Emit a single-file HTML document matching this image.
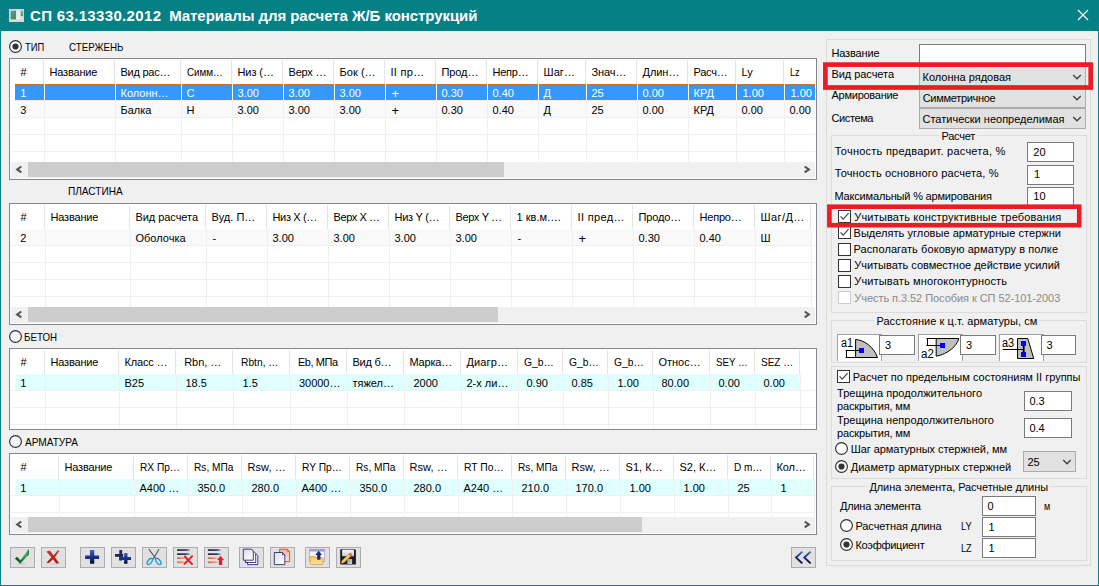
<!DOCTYPE html>
<html><head><meta charset="utf-8"><title>СП 63.13330.2012</title><style>
html,body{margin:0;padding:0}
body{width:1099px;height:586px;overflow:hidden;background:#f0f0f0;position:relative;font-family:"Liberation Sans",sans-serif;font-size:11px;color:#000}
#win{position:absolute;left:0;top:0;width:1097px;height:585px;border:1px solid #0a8287;border-top:none;}
div,span,svg{position:absolute;box-sizing:content-box}
.abs{position:absolute}
.titlebar{left:0;top:0;width:1099px;height:31px;background:#058186}
.t{white-space:pre;line-height:13px;font-size:11px;color:#000}
.t.title{font-size:15px;line-height:18px;font-weight:bold;color:#fff}
.t.w{color:#fff}
.t.dis{color:#8a8a8a}
.t.big{font-size:12px;line-height:13px}
.t.plus{font-size:13px}
.lb{border:1px solid #828790;background:#fff}
.hs{width:1px;height:24px;background:#e5e5e5}
.vg{width:1px;background:#f0f0f0}
.vgs{width:1px;height:16px;background:#fff;opacity:.9}
.hg{height:1px;background:#f0f0f0}
.row{height:16px}
.row.sel{background:#3399ff;box-sizing:border-box;border-top:1px dotted #c87020;border-left:1px dotted #c87020;border-right:1px dotted #c87020}
.row.alt{background:#f9f9f9}
.row.cy{background:#e0ffff}
.sb{height:16px;background:#f0f0f0}
.thumb{height:15px;background:#cdcdcd}
.btn{border:1px solid #adadad;background:#e1e1e1}
.btn svg{left:0;top:0}
.grp{border:1px solid #dcdcdc}
.edit{border:1px solid #7a7a7a;background:#fff}
.combo{border:1px solid #adadad;background:#e1e1e1}
.pic{border:1px solid #a0a0a0;background:#fff;border-bottom:none}
</style></head><body>
<div id="win"></div>
<div class="titlebar"></div>
<svg class="abs" style="left:9px;top:9px" width="15" height="13" viewBox="0 0 15 13">
<defs><linearGradient id="ig" x1="0" y1="0" x2="0.6" y2="1"><stop offset="0" stop-color="#7c98d0"/><stop offset="0.45" stop-color="#4f8f8a"/><stop offset="1" stop-color="#3a9a48"/></linearGradient>
<linearGradient id="ig2" x1="0" y1="0" x2="0" y2="1"><stop offset="0" stop-color="#8fb0c8"/><stop offset="1" stop-color="#4a9a58"/></linearGradient></defs>
<rect x="0" y="0" width="15" height="13" fill="#d4d8d6"/>
<rect x="1.6" y="1.7" width="5.4" height="8.6" fill="url(#ig)"/>
<rect x="7.4" y="1.7" width="4" height="9" fill="#eceeed"/>
<rect x="11.7" y="1.4" width="2.4" height="6" fill="url(#ig2)"/>
<rect x="11.7" y="7.4" width="2.4" height="3.4" fill="#e4e7e6"/>
</svg>
<svg class="abs" style="left:1072px;top:4px" width="22" height="22" viewBox="0 0 22 22">
<path d="M6 6 L16 16 M16 6 L6 16" stroke="#fff" stroke-width="1.1" fill="none"/></svg>
<span id="t0" class="t title" style="left:30px;top:7px;letter-spacing:0.341px;">СП 63.13330.2012</span>
<span id="t1" class="t title" style="left:169.2px;top:7px;letter-spacing:-0.060px;">Материалы для расчета Ж/Б конструкций</span>
<svg class="abs" style="left:7.9px;top:38.9px" width="15" height="15" viewBox="0 0 15 15"><circle cx="7.5" cy="7.5" r="5.9" fill="#fff" stroke="#2e2e2e" stroke-width="1.15"/><circle cx="7.5" cy="7.5" r="3.1" fill="#333"/></svg>
<span id="t2" class="t " style="left:25px;top:41px;transform-origin:0 0;transform:scaleX(0.8516);">ТИП</span>
<span id="t3" class="t " style="left:68.5px;top:41px;transform-origin:0 0;transform:scaleX(0.8860);">СТЕРЖЕНЬ</span>
<span id="t4" class="t " style="left:68.3px;top:185px;transform-origin:0 0;transform:scaleX(0.9160);">ПЛАСТИНА</span>
<svg class="abs" style="left:7.9px;top:329.3px" width="15" height="15" viewBox="0 0 15 15"><circle cx="7.5" cy="7.5" r="5.9" fill="#f4f4f4" stroke="#2e2e2e" stroke-width="1.15"/></svg>
<span id="t5" class="t " style="left:24.3px;top:331px;transform-origin:0 0;transform:scaleX(0.8852);">БЕТОН</span>
<svg class="abs" style="left:7.9px;top:434.2px" width="15" height="15" viewBox="0 0 15 15"><circle cx="7.5" cy="7.5" r="5.9" fill="#f4f4f4" stroke="#2e2e2e" stroke-width="1.15"/></svg>
<span id="t6" class="t " style="left:25px;top:436px;transform-origin:0 0;transform:scaleX(0.9163);">АРМАТУРА</span>
<div class="lb" style="left:9px;top:58px;width:806px;height:120px"></div>
<div class="hs" style="left:43px;top:60px"></div>
<div class="hs" style="left:114px;top:60px"></div>
<div class="hs" style="left:180px;top:60px"></div>
<div class="hs" style="left:231px;top:60px"></div>
<div class="hs" style="left:282px;top:60px"></div>
<div class="hs" style="left:333px;top:60px"></div>
<div class="hs" style="left:384px;top:60px"></div>
<div class="hs" style="left:435px;top:60px"></div>
<div class="hs" style="left:486px;top:60px"></div>
<div class="hs" style="left:537px;top:60px"></div>
<div class="hs" style="left:585px;top:60px"></div>
<div class="hs" style="left:636px;top:60px"></div>
<div class="hs" style="left:687px;top:60px"></div>
<div class="hs" style="left:735px;top:60px"></div>
<div class="hs" style="left:783px;top:60px"></div>
<div class="row sel" style="left:15px;top:84px;width:800px"></div>
<div class="row alt" style="left:15px;top:101px;width:800px"></div>
<div class="vg" style="left:44px;top:84px;height:78px"></div>
<div class="vg" style="left:115px;top:84px;height:78px"></div>
<div class="vg" style="left:181px;top:84px;height:78px"></div>
<div class="vg" style="left:232px;top:84px;height:78px"></div>
<div class="vg" style="left:283px;top:84px;height:78px"></div>
<div class="vg" style="left:334px;top:84px;height:78px"></div>
<div class="vg" style="left:385px;top:84px;height:78px"></div>
<div class="vg" style="left:436px;top:84px;height:78px"></div>
<div class="vg" style="left:487px;top:84px;height:78px"></div>
<div class="vg" style="left:538px;top:84px;height:78px"></div>
<div class="vg" style="left:586px;top:84px;height:78px"></div>
<div class="vg" style="left:637px;top:84px;height:78px"></div>
<div class="vg" style="left:688px;top:84px;height:78px"></div>
<div class="vg" style="left:736px;top:84px;height:78px"></div>
<div class="vg" style="left:784px;top:84px;height:78px"></div>
<div class="hg" style="left:11px;top:100px;width:804px"></div>
<div class="hg" style="left:11px;top:117px;width:804px"></div>
<div class="hg" style="left:11px;top:134px;width:804px"></div>
<div class="hg" style="left:11px;top:151px;width:804px"></div>
<div class="vgs" style="left:44px;top:84px"></div>
<div class="vgs" style="left:115px;top:84px"></div>
<div class="vgs" style="left:181px;top:84px"></div>
<div class="vgs" style="left:232px;top:84px"></div>
<div class="vgs" style="left:283px;top:84px"></div>
<div class="vgs" style="left:334px;top:84px"></div>
<div class="vgs" style="left:385px;top:84px"></div>
<div class="vgs" style="left:436px;top:84px"></div>
<div class="vgs" style="left:487px;top:84px"></div>
<div class="vgs" style="left:538px;top:84px"></div>
<div class="vgs" style="left:586px;top:84px"></div>
<div class="vgs" style="left:637px;top:84px"></div>
<div class="vgs" style="left:688px;top:84px"></div>
<div class="vgs" style="left:736px;top:84px"></div>
<div class="vgs" style="left:784px;top:84px"></div>
<span id="t7" class="t " style="left:20.5px;top:66px;">#</span>
<span id="t8" class="t " style="left:49.5px;top:66px;letter-spacing:-0.179px;">Название</span>
<span id="t9" class="t " style="left:120.5px;top:66px;letter-spacing:-0.258px;">Вид рас…</span>
<span id="t10" class="t " style="left:186.5px;top:66px;transform-origin:0 0;transform:scaleX(0.8926);">Симм…</span>
<span id="t11" class="t " style="left:237.5px;top:66px;letter-spacing:-0.092px;">Низ (…</span>
<span id="t12" class="t " style="left:288.5px;top:66px;letter-spacing:-0.203px;">Верх …</span>
<span id="t13" class="t " style="left:339.5px;top:66px;letter-spacing:0.045px;">Бок (…</span>
<span id="t14" class="t " style="left:390.5px;top:66px;letter-spacing:0.310px;">II пр…</span>
<span id="t15" class="t " style="left:441.5px;top:66px;letter-spacing:-0.107px;">Прод…</span>
<span id="t16" class="t " style="left:492.5px;top:66px;letter-spacing:-0.235px;">Непр…</span>
<span id="t17" class="t " style="left:543.5px;top:66px;letter-spacing:0.060px;">Шаг…</span>
<span id="t18" class="t " style="left:591.5px;top:66px;letter-spacing:-0.107px;">Знач…</span>
<span id="t19" class="t " style="left:642.5px;top:66px;letter-spacing:-0.048px;">Длин…</span>
<span id="t20" class="t " style="left:693.5px;top:66px;letter-spacing:-0.251px;">Расч…</span>
<span id="t21" class="t " style="left:741.5px;top:66px;">Ly</span>
<span id="t22" class="t " style="left:789.5px;top:66px;transform-origin:0 0;transform:scaleX(0.8344);">Lz</span>
<span id="t23" class="t w" style="left:20.2px;top:87px;">1</span>
<span id="t24" class="t w" style="left:120.5px;top:87px;">Колонн…</span>
<span id="t25" class="t w" style="left:186.5px;top:87px;">С</span>
<span id="t26" class="t w" style="left:237.5px;top:87px;">3.00</span>
<span id="t27" class="t w" style="left:288.5px;top:87px;">3.00</span>
<span id="t28" class="t w" style="left:339.5px;top:87px;">3.00</span>
<span id="t29" class="t w plus" style="left:391.5px;top:86.5px;">+</span>
<span id="t30" class="t w" style="left:441.5px;top:87px;">0.30</span>
<span id="t31" class="t w" style="left:492.5px;top:87px;">0.40</span>
<span id="t32" class="t w" style="left:543.5px;top:87px;">Д</span>
<span id="t33" class="t w" style="left:591.5px;top:87px;">25</span>
<span id="t34" class="t w" style="left:642.5px;top:87px;">0.00</span>
<span id="t35" class="t w" style="left:693.5px;top:87px;">КРД</span>
<span id="t36" class="t w" style="left:742.5px;top:87px;">1.00</span>
<span id="t37" class="t w" style="left:790.5px;top:87px;">1.00</span>
<span id="t38" class="t " style="left:20.2px;top:104px;">3</span>
<span id="t39" class="t " style="left:120.5px;top:104px;">Балка</span>
<span id="t40" class="t " style="left:186.5px;top:104px;">Н</span>
<span id="t41" class="t " style="left:237.5px;top:104px;">3.00</span>
<span id="t42" class="t " style="left:288.5px;top:104px;">3.00</span>
<span id="t43" class="t " style="left:339.5px;top:104px;">3.00</span>
<span id="t44" class="t  plus" style="left:391.5px;top:103.5px;">+</span>
<span id="t45" class="t " style="left:441.5px;top:104px;">0.30</span>
<span id="t46" class="t " style="left:492.5px;top:104px;">0.40</span>
<span id="t47" class="t " style="left:543.5px;top:104px;">Д</span>
<span id="t48" class="t " style="left:591.5px;top:104px;">25</span>
<span id="t49" class="t " style="left:642.5px;top:104px;">0.00</span>
<span id="t50" class="t " style="left:693.5px;top:104px;">КРД</span>
<span id="t51" class="t " style="left:741.5px;top:104px;">0.00</span>
<span id="t52" class="t " style="left:789.5px;top:104px;">0.00</span>
<div class="sb" style="left:11px;top:162px;width:804px"></div>
<div class="thumb" style="left:28px;top:162px;width:476px"></div>
<svg class="abs" style="left:11px;top:162px" width="17" height="17" viewBox="0 0 17 17"><path d="M10.3 4.5 L6.2 7.4 L10.3 10.3" fill="none" stroke="#555" stroke-width="2.1"/></svg>
<svg class="abs" style="left:798px;top:162px" width="17" height="17" viewBox="0 0 17 17"><path d="M6.7 4.5 L10.8 7.4 L6.7 10.3" fill="none" stroke="#555" stroke-width="2.1"/></svg>
<div class="lb" style="left:9px;top:203px;width:806px;height:120px"></div>
<div class="hs" style="left:44px;top:205px"></div>
<div class="hs" style="left:129px;top:205px"></div>
<div class="hs" style="left:205px;top:205px"></div>
<div class="hs" style="left:266px;top:205px"></div>
<div class="hs" style="left:327px;top:205px"></div>
<div class="hs" style="left:388px;top:205px"></div>
<div class="hs" style="left:449px;top:205px"></div>
<div class="hs" style="left:510px;top:205px"></div>
<div class="hs" style="left:571px;top:205px"></div>
<div class="hs" style="left:632px;top:205px"></div>
<div class="hs" style="left:693px;top:205px"></div>
<div class="hs" style="left:754px;top:205px"></div>
<div class="hs" style="left:810px;top:205px"></div>
<div class="row alt" style="left:15px;top:229px;width:796px"></div>
<div class="vg" style="left:45px;top:229px;height:78px"></div>
<div class="vg" style="left:130px;top:229px;height:78px"></div>
<div class="vg" style="left:206px;top:229px;height:78px"></div>
<div class="vg" style="left:267px;top:229px;height:78px"></div>
<div class="vg" style="left:328px;top:229px;height:78px"></div>
<div class="vg" style="left:389px;top:229px;height:78px"></div>
<div class="vg" style="left:450px;top:229px;height:78px"></div>
<div class="vg" style="left:511px;top:229px;height:78px"></div>
<div class="vg" style="left:572px;top:229px;height:78px"></div>
<div class="vg" style="left:633px;top:229px;height:78px"></div>
<div class="vg" style="left:694px;top:229px;height:78px"></div>
<div class="vg" style="left:755px;top:229px;height:78px"></div>
<div class="vg" style="left:811px;top:229px;height:78px"></div>
<div class="hg" style="left:11px;top:245px;width:804px"></div>
<div class="hg" style="left:11px;top:262px;width:804px"></div>
<div class="hg" style="left:11px;top:279px;width:804px"></div>
<div class="hg" style="left:11px;top:296px;width:804px"></div>
<span id="t53" class="t " style="left:20.5px;top:211px;">#</span>
<span id="t54" class="t " style="left:50.5px;top:211px;letter-spacing:-0.179px;">Название</span>
<span id="t55" class="t " style="left:135.5px;top:211px;letter-spacing:-0.059px;">Вид расчета</span>
<span id="t56" class="t " style="left:211.5px;top:211px;letter-spacing:0.001px;">Вуд. П…</span>
<span id="t57" class="t " style="left:272.5px;top:211px;letter-spacing:-0.350px;">Низ X (…</span>
<span id="t58" class="t " style="left:333.5px;top:211px;letter-spacing:-0.401px;">Верх X …</span>
<span id="t59" class="t " style="left:394.5px;top:211px;letter-spacing:-0.278px;">Низ Y (…</span>
<span id="t60" class="t " style="left:455.5px;top:211px;letter-spacing:-0.372px;">Верх Y …</span>
<span id="t61" class="t " style="left:516.5px;top:211px;letter-spacing:0.041px;">1 кв.м.…</span>
<span id="t62" class="t " style="left:577.5px;top:211px;letter-spacing:0.336px;">II пред…</span>
<span id="t63" class="t " style="left:638.5px;top:211px;letter-spacing:-0.128px;">Продо…</span>
<span id="t64" class="t " style="left:699.5px;top:211px;letter-spacing:-0.213px;">Непро…</span>
<span id="t65" class="t " style="left:760.5px;top:211px;letter-spacing:0.416px;">Шаг/Д…</span>
<span id="t66" class="t " style="left:20.2px;top:232px;">2</span>
<span id="t67" class="t " style="left:135.5px;top:232px;">Оболочка</span>
<span id="t68" class="t " style="left:212.5px;top:232px;">-</span>
<span id="t69" class="t " style="left:272.5px;top:232px;">3.00</span>
<span id="t70" class="t " style="left:333.5px;top:232px;">3.00</span>
<span id="t71" class="t " style="left:394.5px;top:232px;">3.00</span>
<span id="t72" class="t " style="left:455.5px;top:232px;">3.00</span>
<span id="t73" class="t " style="left:517.5px;top:232px;">-</span>
<span id="t74" class="t  plus" style="left:578.5px;top:231.5px;">+</span>
<span id="t75" class="t " style="left:638.5px;top:232px;">0.30</span>
<span id="t76" class="t " style="left:699.5px;top:232px;">0.40</span>
<span id="t77" class="t " style="left:760.5px;top:232px;">Ш</span>
<div class="sb" style="left:11px;top:307px;width:804px"></div>
<div class="thumb" style="left:28px;top:307px;width:470px"></div>
<svg class="abs" style="left:11px;top:307px" width="17" height="17" viewBox="0 0 17 17"><path d="M10.3 4.5 L6.2 7.4 L10.3 10.3" fill="none" stroke="#555" stroke-width="2.1"/></svg>
<svg class="abs" style="left:798px;top:307px" width="17" height="17" viewBox="0 0 17 17"><path d="M6.7 4.5 L10.8 7.4 L6.7 10.3" fill="none" stroke="#555" stroke-width="2.1"/></svg>
<div class="lb" style="left:9px;top:348px;width:806px;height:80px"></div>
<div class="hs" style="left:44px;top:350px"></div>
<div class="hs" style="left:118px;top:350px"></div>
<div class="hs" style="left:175px;top:350px"></div>
<div class="hs" style="left:232px;top:350px"></div>
<div class="hs" style="left:289px;top:350px"></div>
<div class="hs" style="left:346px;top:350px"></div>
<div class="hs" style="left:403px;top:350px"></div>
<div class="hs" style="left:460px;top:350px"></div>
<div class="hs" style="left:517px;top:350px"></div>
<div class="hs" style="left:562px;top:350px"></div>
<div class="hs" style="left:607px;top:350px"></div>
<div class="hs" style="left:652px;top:350px"></div>
<div class="hs" style="left:709px;top:350px"></div>
<div class="hs" style="left:754px;top:350px"></div>
<div class="hs" style="left:799px;top:350px"></div>
<div class="row cy" style="left:15px;top:374px;width:785px"></div>
<div class="vg" style="left:45px;top:374px;height:54px"></div>
<div class="vg" style="left:119px;top:374px;height:54px"></div>
<div class="vg" style="left:176px;top:374px;height:54px"></div>
<div class="vg" style="left:233px;top:374px;height:54px"></div>
<div class="vg" style="left:290px;top:374px;height:54px"></div>
<div class="vg" style="left:347px;top:374px;height:54px"></div>
<div class="vg" style="left:404px;top:374px;height:54px"></div>
<div class="vg" style="left:461px;top:374px;height:54px"></div>
<div class="vg" style="left:518px;top:374px;height:54px"></div>
<div class="vg" style="left:563px;top:374px;height:54px"></div>
<div class="vg" style="left:608px;top:374px;height:54px"></div>
<div class="vg" style="left:653px;top:374px;height:54px"></div>
<div class="vg" style="left:710px;top:374px;height:54px"></div>
<div class="vg" style="left:755px;top:374px;height:54px"></div>
<div class="vg" style="left:800px;top:374px;height:54px"></div>
<div class="hg" style="left:11px;top:390px;width:804px"></div>
<div class="hg" style="left:11px;top:407px;width:804px"></div>
<div class="hg" style="left:11px;top:424px;width:804px"></div>
<span id="t78" class="t " style="left:20.5px;top:356px;">#</span>
<span id="t79" class="t " style="left:50.5px;top:356px;letter-spacing:-0.179px;">Название</span>
<span id="t80" class="t " style="left:124.5px;top:356px;letter-spacing:-0.167px;">Класс …</span>
<span id="t81" class="t " style="left:184.2px;top:356px;letter-spacing:-0.039px;">Rbn, …</span>
<span id="t82" class="t " style="left:241.3px;top:356px;transform-origin:0 0;transform:scaleX(0.9316);">Rbtn, …</span>
<span id="t83" class="t " style="left:297.9px;top:356px;letter-spacing:-0.428px;">Eb, МПа</span>
<span id="t84" class="t " style="left:352.5px;top:356px;letter-spacing:-0.233px;">Вид б…</span>
<span id="t85" class="t " style="left:409.5px;top:356px;letter-spacing:-0.181px;">Марка…</span>
<span id="t86" class="t " style="left:466.5px;top:356px;letter-spacing:0.131px;">Диагр…</span>
<span id="t87" class="t " style="left:523.5px;top:356px;transform-origin:0 0;transform:scaleX(0.9341);">G_b…</span>
<span id="t88" class="t " style="left:568.5px;top:356px;transform-origin:0 0;transform:scaleX(0.9341);">G_b…</span>
<span id="t89" class="t " style="left:613.5px;top:356px;transform-origin:0 0;transform:scaleX(0.9341);">G_b…</span>
<span id="t90" class="t " style="left:658.5px;top:356px;letter-spacing:-0.019px;">Относ…</span>
<span id="t91" class="t " style="left:715.5px;top:356px;transform-origin:0 0;transform:scaleX(0.8836);">SEY …</span>
<span id="t92" class="t " style="left:760.5px;top:356px;transform-origin:0 0;transform:scaleX(0.9111);">SEZ …</span>
<span id="t93" class="t " style="left:20.2px;top:377px;">1</span>
<span id="t94" class="t " style="left:124.5px;top:377px;">B25</span>
<span id="t95" class="t " style="left:185.5px;top:377px;">18.5</span>
<span id="t96" class="t " style="left:242.5px;top:377px;">1.5</span>
<span id="t97" class="t " style="left:298.9px;top:377px;">30000…</span>
<span id="t98" class="t " style="left:352.5px;top:377px;">тяжел…</span>
<span id="t99" class="t " style="left:413.5px;top:377px;">2000</span>
<span id="t100" class="t " style="left:466.5px;top:377px;">2-х ли…</span>
<span id="t101" class="t " style="left:526.5px;top:377px;">0.90</span>
<span id="t102" class="t " style="left:571.5px;top:377px;">0.85</span>
<span id="t103" class="t " style="left:617.5px;top:377px;">1.00</span>
<span id="t104" class="t " style="left:661.5px;top:377px;">80.00</span>
<span id="t105" class="t " style="left:718.5px;top:377px;">0.00</span>
<span id="t106" class="t " style="left:763.5px;top:377px;">0.00</span>
<div class="lb" style="left:9px;top:453px;width:806px;height:80px"></div>
<div class="hs" style="left:58px;top:455px"></div>
<div class="hs" style="left:133px;top:455px"></div>
<div class="hs" style="left:187px;top:455px"></div>
<div class="hs" style="left:241px;top:455px"></div>
<div class="hs" style="left:295px;top:455px"></div>
<div class="hs" style="left:349px;top:455px"></div>
<div class="hs" style="left:403px;top:455px"></div>
<div class="hs" style="left:457px;top:455px"></div>
<div class="hs" style="left:511px;top:455px"></div>
<div class="hs" style="left:565px;top:455px"></div>
<div class="hs" style="left:619px;top:455px"></div>
<div class="hs" style="left:673px;top:455px"></div>
<div class="hs" style="left:727px;top:455px"></div>
<div class="hs" style="left:770px;top:455px"></div>
<div class="hs" style="left:813px;top:455px"></div>
<div class="row cy" style="left:15px;top:479px;width:799px"></div>
<div class="vg" style="left:59px;top:479px;height:38px"></div>
<div class="vg" style="left:134px;top:479px;height:38px"></div>
<div class="vg" style="left:188px;top:479px;height:38px"></div>
<div class="vg" style="left:242px;top:479px;height:38px"></div>
<div class="vg" style="left:296px;top:479px;height:38px"></div>
<div class="vg" style="left:350px;top:479px;height:38px"></div>
<div class="vg" style="left:404px;top:479px;height:38px"></div>
<div class="vg" style="left:458px;top:479px;height:38px"></div>
<div class="vg" style="left:512px;top:479px;height:38px"></div>
<div class="vg" style="left:566px;top:479px;height:38px"></div>
<div class="vg" style="left:620px;top:479px;height:38px"></div>
<div class="vg" style="left:674px;top:479px;height:38px"></div>
<div class="vg" style="left:728px;top:479px;height:38px"></div>
<div class="vg" style="left:771px;top:479px;height:38px"></div>
<div class="vg" style="left:814px;top:479px;height:38px"></div>
<div class="hg" style="left:11px;top:495px;width:804px"></div>
<div class="hg" style="left:11px;top:512px;width:804px"></div>
<span id="t107" class="t " style="left:20.5px;top:461px;">#</span>
<span id="t108" class="t " style="left:64.5px;top:461px;letter-spacing:-0.179px;">Название</span>
<span id="t109" class="t " style="left:139.5px;top:461px;transform-origin:0 0;transform:scaleX(0.9222);">RX Пр…</span>
<span id="t110" class="t " style="left:193.5px;top:461px;transform-origin:0 0;transform:scaleX(0.9240);">Rs, МПа</span>
<span id="t111" class="t " style="left:247.5px;top:461px;letter-spacing:0.059px;">Rsw, …</span>
<span id="t112" class="t " style="left:301.5px;top:461px;transform-origin:0 0;transform:scaleX(0.9286);">RY Пр…</span>
<span id="t113" class="t " style="left:355.5px;top:461px;transform-origin:0 0;transform:scaleX(0.9240);">Rs, МПа</span>
<span id="t114" class="t " style="left:409.5px;top:461px;letter-spacing:0.059px;">Rsw, …</span>
<span id="t115" class="t " style="left:463.5px;top:461px;transform-origin:0 0;transform:scaleX(0.9372);">RT По…</span>
<span id="t116" class="t " style="left:517.5px;top:461px;transform-origin:0 0;transform:scaleX(0.9240);">Rs, МПа</span>
<span id="t117" class="t " style="left:571.5px;top:461px;letter-spacing:0.059px;">Rsw, …</span>
<span id="t118" class="t " style="left:625.5px;top:461px;letter-spacing:0.043px;">S1, К…</span>
<span id="t119" class="t " style="left:679.5px;top:461px;letter-spacing:-0.017px;">S2, К…</span>
<span id="t120" class="t " style="left:733.5px;top:461px;transform-origin:0 0;transform:scaleX(0.9111);">D m…</span>
<span id="t121" class="t " style="left:776.5px;top:461px;letter-spacing:-0.101px;">Кол…</span>
<span id="t122" class="t " style="left:20.2px;top:482px;">1</span>
<span id="t123" class="t " style="left:139.5px;top:482px;">A400 …</span>
<span id="t124" class="t " style="left:197.5px;top:482px;">350.0</span>
<span id="t125" class="t " style="left:251.5px;top:482px;">280.0</span>
<span id="t126" class="t " style="left:301.5px;top:482px;">A400 …</span>
<span id="t127" class="t " style="left:359.5px;top:482px;">350.0</span>
<span id="t128" class="t " style="left:413.5px;top:482px;">280.0</span>
<span id="t129" class="t " style="left:463.5px;top:482px;">A240 …</span>
<span id="t130" class="t " style="left:521.5px;top:482px;">210.0</span>
<span id="t131" class="t " style="left:575.5px;top:482px;">170.0</span>
<span id="t132" class="t " style="left:629.5px;top:482px;">1.00</span>
<span id="t133" class="t " style="left:683.5px;top:482px;">1.00</span>
<span id="t134" class="t " style="left:737.5px;top:482px;">25</span>
<span id="t135" class="t " style="left:780.5px;top:482px;">1</span>
<div class="sb" style="left:11px;top:517px;width:804px"></div>
<div class="thumb" style="left:28px;top:517px;width:614px"></div>
<svg class="abs" style="left:11px;top:517px" width="17" height="17" viewBox="0 0 17 17"><path d="M10.3 4.5 L6.2 7.4 L10.3 10.3" fill="none" stroke="#555" stroke-width="2.1"/></svg>
<svg class="abs" style="left:798px;top:517px" width="17" height="17" viewBox="0 0 17 17"><path d="M6.7 4.5 L10.8 7.4 L6.7 10.3" fill="none" stroke="#555" stroke-width="2.1"/></svg>
<svg class="abs" style="left:0;top:0" width="0" height="0"><defs>
<linearGradient id="gBlue" x1="0" y1="0" x2="0" y2="1"><stop offset="0" stop-color="#4a66c0"/><stop offset="0.35" stop-color="#1f3a98"/><stop offset="0.7" stop-color="#16256e"/><stop offset="1" stop-color="#07072c"/></linearGradient>
<linearGradient id="gNavy" x1="0" y1="0" x2="0" y2="1"><stop offset="0" stop-color="#2a2f78"/><stop offset="1" stop-color="#141440"/></linearGradient>
<linearGradient id="gGreen" x1="0" y1="0" x2="1" y2="0"><stop offset="0" stop-color="#0c5a1c"/><stop offset="0.55" stop-color="#177a2c"/><stop offset="0.8" stop-color="#4aa85a"/><stop offset="1" stop-color="#0f5e20"/></linearGradient>
<linearGradient id="gRed" x1="0" y1="0" x2="0" y2="1"><stop offset="0" stop-color="#c83a34"/><stop offset="0.5" stop-color="#b82620"/><stop offset="1" stop-color="#a81c18"/></linearGradient>
<linearGradient id="gDark" x1="0" y1="0" x2="1" y2="0"><stop offset="0" stop-color="#26264a"/><stop offset="0.7" stop-color="#3a3a5c"/><stop offset="1" stop-color="#b0b0c0"/></linearGradient>
<linearGradient id="gSalm" x1="0" y1="0" x2="1" y2="0"><stop offset="0" stop-color="#d8603c"/><stop offset="0.6" stop-color="#e89078"/><stop offset="1" stop-color="#f4d0c4"/></linearGradient>
<linearGradient id="gPage" x1="0" y1="0" x2="1" y2="1"><stop offset="0" stop-color="#dcdce8"/><stop offset="1" stop-color="#ffffff"/></linearGradient>
<linearGradient id="gPink" x1="0" y1="0" x2="0" y2="1"><stop offset="0" stop-color="#eeb0a0"/><stop offset="1" stop-color="#fbe8e2"/></linearGradient>
<linearGradient id="gFold" x1="0" y1="0" x2="0" y2="1"><stop offset="0" stop-color="#f6c45a"/><stop offset="1" stop-color="#fbe0a0"/></linearGradient>
<linearGradient id="gLabel" x1="0" y1="0" x2="0" y2="1"><stop offset="0" stop-color="#f8f8fc"/><stop offset="1" stop-color="#c4c8d4"/></linearGradient>
<linearGradient id="gShut" x1="0" y1="0" x2="1" y2="1"><stop offset="0" stop-color="#9a9a9a"/><stop offset="1" stop-color="#d8d8d8"/></linearGradient>
</defs></svg>
<div class="btn" style="left:10px;top:547px;width:23px;height:19px"><svg width="23" height="19" viewBox="1 1 23 19"><ellipse cx="11" cy="17" rx="5" ry="0.9" fill="#c8c8c8" opacity=".7"/><path d="M4.8 11.4 L7.1 9.8 L10.5 13.3 L18.9 1.9 L18.9 7.6 L10.3 16.8 Z" fill="url(#gGreen)"/><path d="M11 13.2 L18.3 3.6 L18.3 6.2 L11.3 14 Z" fill="#58b868" opacity=".55"/></svg></div>
<div class="btn" style="left:41px;top:547px;width:23px;height:19px"><svg width="23" height="19" viewBox="1 1 23 19"><ellipse cx="12.5" cy="17" rx="5" ry="0.8" fill="#c8c8c8" opacity=".7"/><path d="M5.3 4.6 L8.9 3.4 L12.6 8.6 L16.6 3.6 L18.6 3.4 L13.9 10.2 L18.3 16.3 L15.2 16.6 L11.9 12.3 L8 16 L5.4 15.8 L10.4 10.2 Z" fill="url(#gRed)"/></svg></div>
<div class="btn" style="left:80px;top:547px;width:23px;height:19px"><svg width="23" height="19" viewBox="1 1 23 19"><path d="M10 3.1 H14.3 V8.4 H19.1 V12 H14.3 V16.8 H10 V12 H5.1 V8.4 H10 Z" fill="url(#gBlue)"/></svg></div>
<div class="btn" style="left:111px;top:547px;width:23px;height:19px"><svg width="23" height="19" viewBox="1 1 23 19"><path d="M8.3 3.1 H11.2 V6.9 H12.2 V9.8 H11.2 V13.6 H8.3 V9.8 H4 V6.9 H8.3 Z" fill="url(#gNavy)"/><path d="M13.1 6 H16.5 V10.1 H20 V13 H16.5 V16.8 H13.1 V13 H8.3 V10.1 H13.1 Z" fill="url(#gBlue)"/></svg></div>
<div class="btn" style="left:142px;top:547px;width:23px;height:19px"><svg width="23" height="19" viewBox="1 1 23 19"><path d="M6.8 2.2 L14.4 12.4 M17 2.2 L10.9 12.4" stroke="#5a5a5a" stroke-width="1.1" fill="none"/><ellipse cx="7.8" cy="14.4" rx="1.9" ry="3.6" transform="rotate(38 7.8 14.4)" fill="#c8e6f6" stroke="#2a98d0" stroke-width="1.3"/><ellipse cx="16.3" cy="14.4" rx="1.9" ry="3.6" transform="rotate(-38 16.3 14.4)" fill="#c8e6f6" stroke="#2a98d0" stroke-width="1.3"/></svg></div>
<div class="btn" style="left:173px;top:547px;width:23px;height:19px"><svg width="23" height="19" viewBox="1 1 23 19"><rect x="4.1" y="2.2" width="12.9" height="1.7" fill="url(#gDark)"/><rect x="4.1" y="6.3" width="12.9" height="1.7" fill="url(#gDark)"/><rect x="4.1" y="10.3" width="9" height="1.7" fill="url(#gSalm)"/><rect x="4.1" y="14.4" width="9" height="1.7" fill="url(#gSalm)"/><path d="M11.4 9 L19.6 17.6 M19.7 8.6 L11 17.4" stroke="#e81c24" stroke-width="2" fill="none"/></svg></div>
<div class="btn" style="left:204px;top:547px;width:23px;height:19px"><svg width="23" height="19" viewBox="1 1 23 19"><rect x="3.9" y="2.2" width="12.9" height="1.7" fill="url(#gDark)"/><rect x="3.9" y="6.3" width="12.9" height="1.7" fill="url(#gDark)"/><rect x="3.9" y="10.3" width="11" height="1.7" fill="url(#gSalm)"/><rect x="3.9" y="14.4" width="11" height="1.7" fill="url(#gSalm)"/><path d="M16.5 8.8 L20 13 H18.2 V17.9 H14.9 V13 H13.1 Z" fill="#e81c24"/></svg></div>
<div class="btn" style="left:239px;top:547px;width:23px;height:19px"><svg width="23" height="19" viewBox="1 1 23 19"><path d="M12.4 2.2 L18.8 8.6 V17.6 H8.6 V15.5 H6.5 V13.2" fill="#fff" stroke="#2e2a6e" stroke-width="0.9"/><path d="M6.5 13.2 V15.5 H16.7 V6.5" fill="none" stroke="#2e2a6e" stroke-width="0.9"/><path d="M4.3 2.2 H12.4 L14.3 4.1 V13.2 H4.3 Z" fill="url(#gPage)" stroke="#2e2a6e" stroke-width="0.9"/></svg></div>
<div class="btn" style="left:270px;top:547px;width:23px;height:19px"><svg width="23" height="19" viewBox="1 1 23 19"><path d="M9.6 2.2 H17.4 L19.6 4.4 V14.6 H9.6 Z" fill="url(#gPink)" stroke="#cc5030" stroke-width="0.9"/><path d="M17.4 2.2 V4.4 H19.6" fill="none" stroke="#cc5030" stroke-width="0.7"/><path d="M4.3 5.5 H12.5 L14.8 7.8 V17.6 H4.3 Z" fill="url(#gPage)" stroke="#2e2a6e" stroke-width="0.9"/><path d="M12.5 5.5 V7.8 H14.8" fill="none" stroke="#2e2a6e" stroke-width="0.7"/></svg></div>
<div class="btn" style="left:305px;top:547px;width:23px;height:19px"><svg width="23" height="19" viewBox="1 1 23 19"><rect x="4.6" y="2.2" width="15" height="12.4" fill="#f4f4fc" stroke="#a8a8d8" stroke-width="0.8"/><rect x="4.6" y="2.2" width="15" height="2.3" fill="#9c9cdc"/><path d="M4.8 11 Q4.8 9.4 6.4 9.4 H10 L11.2 10.6 H17 Q18 10.6 18 11.6 V16.4 Q18 17.6 16.8 17.6 H6.4 Q5.2 17.6 5.2 16.4 Z" fill="url(#gFold)" stroke="#dca030" stroke-width="0.8"/><path d="M13.7 3.8 L17 7.9 H15.4 V12.7 H12.2 V7.9 H10.3 Z" fill="#1a2a70"/></svg></div>
<div class="btn" style="left:336px;top:547px;width:23px;height:19px"><svg width="23" height="19" viewBox="1 1 23 19"><path d="M4.7 2.2 H18.8 L19.9 3.3 V17.6 H4.7 Q4.2 17.6 4.2 17.1 V2.7 Q4.2 2.2 4.7 2.2 Z" fill="#1a1a26"/><rect x="6.1" y="2.8" width="11.9" height="6.5" rx="0.6" fill="url(#gLabel)"/><rect x="11.3" y="12" width="4.8" height="5" fill="url(#gShut)"/><path d="M5.2 16.2 L6.2 13.4 L12.9 7.2 L15 9.2 L8.2 15.6 Z" fill="#f5c530" stroke="#a87808" stroke-width="0.5"/><path d="M7 13.4 L13.2 7.8" stroke="#fbe48a" stroke-width="0.7"/><path d="M12.9 7.2 L13.9 6.3 Q14.6 5.9 15.3 6.6 L15.9 7.4 Q16.2 8.1 15.6 8.6 L15 9.2 Z" fill="#e86a6a" stroke="#b04040" stroke-width="0.4"/><path d="M5.2 16.2 L6.2 13.4 L8.2 15.6 Z" fill="#f0b8a0"/><path d="M5.2 16.2 L5.6 15.1 L6.3 15.9 Z" fill="#703020"/></svg></div>
<div class="btn" style="left:791px;top:547px;width:23px;height:19px"><svg width="23" height="19" viewBox="792 548 23 19">
<defs><linearGradient id="cg" x1="0" y1="0" x2="0" y2="1"><stop offset="0" stop-color="#5866b8"/><stop offset="0.45" stop-color="#1e2a80"/><stop offset="1" stop-color="#0a0a2c"/></linearGradient></defs>
<path d="M802.3 551.6 L796 557.5 L802.3 563.4 M810.6 551.6 L804.3 557.5 L810.6 563.4" fill="none" stroke="url(#cg)" stroke-width="1.9"/></svg></div>
<div class="grp" style="left:826px;top:39px;width:263px;height:525px"></div>
<span id="t136" class="t " style="left:831.5px;top:47px;letter-spacing:-0.165px;">Название</span>
<div class="edit" style="left:919px;top:44px;width:165px;height:20px"></div>
<span id="t137" class="t " style="left:831.5px;top:68px;letter-spacing:-0.059px;">Вид расчета</span>
<span id="t138" class="t " style="left:831.5px;top:88.7px;letter-spacing:-0.258px;">Армирование</span>
<span id="t139" class="t " style="left:831.5px;top:112px;letter-spacing:-0.385px;">Система</span>
<div class="combo" style="left:919px;top:66px;width:165px;height:19px"></div>
<span id="t140" class="t " style="left:922.5px;top:71px;letter-spacing:-0.004px;">Колонна рядовая</span>
<svg class="abs" style="left:1071.3px;top:72.9px" width="12" height="8" viewBox="0 0 12 8"><path d="M2.2 2 L6 5.8 L9.8 2" fill="none" stroke="#3c3c3c" stroke-width="1.25"/></svg>
<div class="combo" style="left:919px;top:87px;width:165px;height:19px"></div>
<span id="t141" class="t " style="left:922.7px;top:92px;letter-spacing:-0.301px;">Симметричное</span>
<svg class="abs" style="left:1071.3px;top:93.9px" width="12" height="8" viewBox="0 0 12 8"><path d="M2.2 2 L6 5.8 L9.8 2" fill="none" stroke="#3c3c3c" stroke-width="1.25"/></svg>
<div class="combo" style="left:919px;top:108px;width:165px;height:19px"></div>
<span id="t142" class="t " style="left:922.5px;top:113px;letter-spacing:0.003px;">Статически неопределимая</span>
<svg class="abs" style="left:1071.3px;top:114.9px" width="12" height="8" viewBox="0 0 12 8"><path d="M2.2 2 L6 5.8 L9.8 2" fill="none" stroke="#3c3c3c" stroke-width="1.25"/></svg>
<div class="grp" style="left:831px;top:135px;width:254px;height:176px"></div>
<div class="abs" style="left:939.4px;top:130px;width:38px;height:12px;background:#f0f0f0"></div>
<span id="t143" class="t " style="left:941.4px;top:130px;letter-spacing:-0.200px;">Расчет</span>
<span id="t144" class="t " style="left:834.7px;top:145px;letter-spacing:0.248px;">Точность предварит. расчета, %</span>
<div class="edit" style="left:1027px;top:142px;width:45px;height:18px"></div>
<span id="t145" class="t " style="left:1033.3px;top:145.5px;">20</span>
<span id="t146" class="t " style="left:834.7px;top:167px;letter-spacing:0.143px;">Точность основного расчета, %</span>
<div class="edit" style="left:1027px;top:165px;width:45px;height:18px"></div>
<span id="t147" class="t " style="left:1034px;top:167.5px;">1</span>
<span id="t148" class="t " style="left:834.5px;top:189.5px;letter-spacing:-0.181px;">Максимальный % армирования</span>
<div class="edit" style="left:1027px;top:187px;width:45px;height:18px"></div>
<span id="t149" class="t " style="left:1033.3px;top:189.5px;">10</span>
<svg class="abs" style="left:838px;top:210px" width="13" height="13" viewBox="0 0 13 13"><rect x="0.5" y="0.5" width="12" height="12" fill="#fff" stroke="#333333"/><path d="M2.6 6.4 L5.2 9.2 L10.6 3.2" fill="none" stroke="#3a3a3a" stroke-width="1.05"/></svg>
<span id="t150" class="t " style="left:854.3px;top:211px;letter-spacing:0.174px;">Учитывать конструктивные требования</span>
<svg class="abs" style="left:838px;top:226px" width="13" height="13" viewBox="0 0 13 13"><rect x="0.5" y="0.5" width="12" height="12" fill="#fff" stroke="#333333"/><path d="M2.6 6.4 L5.2 9.2 L10.6 3.2" fill="none" stroke="#3a3a3a" stroke-width="1.05"/></svg>
<span id="t151" class="t " style="left:853.5px;top:226.5px;letter-spacing:0.039px;">Выделять угловые арматурные стержни</span>
<svg class="abs" style="left:838px;top:243px" width="13" height="13" viewBox="0 0 13 13"><rect x="0.5" y="0.5" width="12" height="12" fill="#fff" stroke="#333333"/></svg>
<span id="t152" class="t " style="left:853.5px;top:242.5px;letter-spacing:0.092px;">Располагать боковую арматуру в полке</span>
<svg class="abs" style="left:838px;top:259px" width="13" height="13" viewBox="0 0 13 13"><rect x="0.5" y="0.5" width="12" height="12" fill="#fff" stroke="#333333"/></svg>
<span id="t153" class="t " style="left:854.3px;top:258.5px;letter-spacing:-0.020px;">Учитывать совместное действие усилий</span>
<svg class="abs" style="left:838px;top:275px" width="13" height="13" viewBox="0 0 13 13"><rect x="0.5" y="0.5" width="12" height="12" fill="#fff" stroke="#333333"/></svg>
<span id="t154" class="t " style="left:854.3px;top:275px;letter-spacing:0.143px;">Учитывать многоконтурность</span>
<svg class="abs" style="left:838px;top:291px" width="13" height="13" viewBox="0 0 13 13"><rect x="0.5" y="0.5" width="12" height="12" fill="#fff" stroke="#cccccc"/></svg>
<span id="t155" class="t dis" style="left:854.3px;top:291.5px;letter-spacing:-0.055px;">Учесть п.3.52 Пособия к СП 52-101-2003</span>
<div class="grp" style="left:831px;top:320px;width:254px;height:41px"></div>
<div class="abs" style="left:874.4px;top:315px;width:165px;height:12px;background:#f0f0f0"></div>
<span id="t156" class="t " style="left:876.4px;top:315px;letter-spacing:0.067px;">Расстояние к ц.т. арматуры, см</span>
<div class="pic" style="left:837px;top:334px;width:43px;height:26px"></div>
<svg class="abs" style="left:0;top:0" width="1099" height="586" viewBox="0 0 1099 586"><path d="M855.6 339.5 C864 340 874 347 877.5 357.5 L855.6 357.5 Z" fill="#c0c0c0" stroke="#000" stroke-width="1"/>
<path d="M845.5 357.5 H856 M845.5 350.5 H859 M846.5 350.5 V357.5" stroke="#000" stroke-width="1" fill="none"/>
<rect x="859" y="348" width="5" height="5" fill="#0000ff"/></svg>
<div class="pic" style="left:918px;top:334px;width:43px;height:26px"></div>
<svg class="abs" style="left:0;top:0" width="1099" height="586" viewBox="0 0 1099 586"><path d="M936.2 338.5 L958.8 338.5 C957 346 948 354 936.2 356.2 Z" fill="#c0c0c0" stroke="#000" stroke-width="1"/>
<path d="M926.3 338.5 H937 M926.3 345.5 H940 M927.5 338.5 V345.5" stroke="#000" stroke-width="1" fill="none"/>
<rect x="940" y="343" width="5" height="5" fill="#0000ff"/></svg>
<div class="pic" style="left:999px;top:334px;width:43px;height:26px"></div>
<svg class="abs" style="left:0;top:0" width="1099" height="586" viewBox="0 0 1099 586"><path d="M1017.5 338.5 L1027.8 338.5 L1033.7 358.5 L1017.5 358.5 Z" fill="#c0c0c0" stroke="#000" stroke-width="1"/>
<path d="M1002.8 349.5 H1023" stroke="#000" stroke-width="1" fill="none"/><path d="M1023.7 346 V352" stroke="#000" stroke-width="1.8" fill="none"/>
<rect x="1021" y="341" width="5" height="5" fill="#0000ff"/><rect x="1021" y="352" width="5" height="5" fill="#0000ff"/></svg>
<span id="t157" class="t big" style="left:840.5px;top:337px;transform-origin:0 0;transform:scaleX(0.8982);">a1</span>
<span id="t158" class="t big" style="left:920.5px;top:347.5px;transform-origin:0 0;transform:scaleX(0.9581);">a2</span>
<span id="t159" class="t big" style="left:1002px;top:336.7px;transform-origin:0 0;transform:scaleX(0.9132);">a3</span>
<div class="edit" style="left:879px;top:335px;width:34px;height:18px"></div>
<span id="t160" class="t " style="left:885px;top:339px;">3</span>
<div class="edit" style="left:960px;top:335px;width:34px;height:18px"></div>
<span id="t161" class="t " style="left:966px;top:339px;">3</span>
<div class="edit" style="left:1041px;top:335px;width:33px;height:18px"></div>
<span id="t162" class="t " style="left:1046.5px;top:339px;">3</span>
<div class="grp" style="left:831px;top:366px;width:254px;height:111px"></div>
<svg class="abs" style="left:837px;top:370px" width="13" height="13" viewBox="0 0 13 13"><rect x="0.5" y="0.5" width="12" height="12" fill="#fff" stroke="#333333"/><path d="M2.6 6.4 L5.2 9.2 L10.6 3.2" fill="none" stroke="#3a3a3a" stroke-width="1.05"/></svg>
<span id="t163" class="t " style="left:852.8px;top:371px;letter-spacing:0.003px;">Расчет по предельным состояниям II группы</span>
<span id="t164" class="t " style="left:837px;top:387px;letter-spacing:0.050px;">Трещина продолжительного</span>
<span id="t165" class="t " style="left:837px;top:400px;letter-spacing:-0.138px;">раскрытия, мм</span>
<div class="edit" style="left:1024px;top:391px;width:46px;height:18px"></div>
<span id="t166" class="t " style="left:1029.4px;top:395px;">0.3</span>
<span id="t167" class="t " style="left:837px;top:414px;letter-spacing:0.038px;">Трещина непродолжительного</span>
<span id="t168" class="t " style="left:837px;top:427px;letter-spacing:-0.138px;">раскрытия, мм</span>
<div class="edit" style="left:1024px;top:418px;width:46px;height:18px"></div>
<span id="t169" class="t " style="left:1029.4px;top:422px;">0.4</span>
<svg class="abs" style="left:834px;top:441px" width="15" height="15" viewBox="0 0 15 15"><circle cx="7.5" cy="7.5" r="5.9" fill="#fff" stroke="#2e2e2e" stroke-width="1.15"/></svg>
<span id="t170" class="t " style="left:850.7px;top:443.2px;letter-spacing:-0.055px;">Шаг арматурных стержней, мм</span>
<svg class="abs" style="left:834px;top:459px" width="15" height="15" viewBox="0 0 15 15"><circle cx="7.5" cy="7.5" r="5.9" fill="#fff" stroke="#2e2e2e" stroke-width="1.15"/><circle cx="7.5" cy="7.5" r="3.1" fill="#333"/></svg>
<span id="t171" class="t " style="left:850.7px;top:461px;letter-spacing:0.002px;">Диаметр арматурных стержней</span>
<div class="combo" style="left:1023px;top:451px;width:51px;height:19px"></div>
<span id="t172" class="t " style="left:1027.4px;top:455.5px;">25</span>
<svg class="abs" style="left:1060.8px;top:457.9px" width="12" height="8" viewBox="0 0 12 8"><path d="M2.2 2 L6 5.8 L9.8 2" fill="none" stroke="#3c3c3c" stroke-width="1.25"/></svg>
<div class="grp" style="left:831px;top:486px;width:254px;height:73px"></div>
<div class="abs" style="left:867.4px;top:481.2px;width:182.7px;height:12px;background:#f0f0f0"></div>
<span id="t173" class="t " style="left:869.4px;top:481.2px;letter-spacing:-0.083px;">Длина элемента, Расчетные длины</span>
<span id="t174" class="t " style="left:840px;top:500px;letter-spacing:-0.228px;">Длина элемента</span>
<div class="edit" style="left:982px;top:496px;width:52px;height:18px"></div>
<span id="t175" class="t " style="left:987.6px;top:500px;">0</span>
<span id="t176" class="t " style="left:1044.4px;top:500px;transform-origin:0 0;transform:scaleX(0.8198);">м</span>
<svg class="abs" style="left:838.7px;top:517.8px" width="15" height="15" viewBox="0 0 15 15"><circle cx="7.5" cy="7.5" r="5.9" fill="#fff" stroke="#2e2e2e" stroke-width="1.15"/></svg>
<span id="t177" class="t " style="left:855.4px;top:519.8px;letter-spacing:-0.077px;">Расчетная длина</span>
<span id="t178" class="t " style="left:960.9px;top:519.8px;transform-origin:0 0;transform:scaleX(0.8465);">LY</span>
<div class="edit" style="left:982px;top:517px;width:52px;height:18px"></div>
<span id="t179" class="t " style="left:988.5px;top:521px;">1</span>
<svg class="abs" style="left:838.7px;top:537.3px" width="15" height="15" viewBox="0 0 15 15"><circle cx="7.5" cy="7.5" r="5.9" fill="#fff" stroke="#2e2e2e" stroke-width="1.15"/><circle cx="7.5" cy="7.5" r="3.1" fill="#333"/></svg>
<span id="t180" class="t " style="left:855.4px;top:538.5px;letter-spacing:-0.276px;">Коэффициент</span>
<span id="t181" class="t " style="left:960.9px;top:542.3px;transform-origin:0 0;transform:scaleX(0.8331);">LZ</span>
<div class="edit" style="left:982px;top:538px;width:52px;height:18px"></div>
<span id="t182" class="t " style="left:988.5px;top:542px;">1</span>
<svg class="abs" style="left:0;top:0" width="1099" height="586" viewBox="0 0 1099 586"><rect x="825.4" y="64.6" width="265.3" height="22.9" fill="none" stroke="#ed1c24" stroke-width="4.7"/><rect x="829.4" y="206.7" width="249.8" height="18.5" fill="none" stroke="#ed1c24" stroke-width="4.6"/></svg>
</body></html>
